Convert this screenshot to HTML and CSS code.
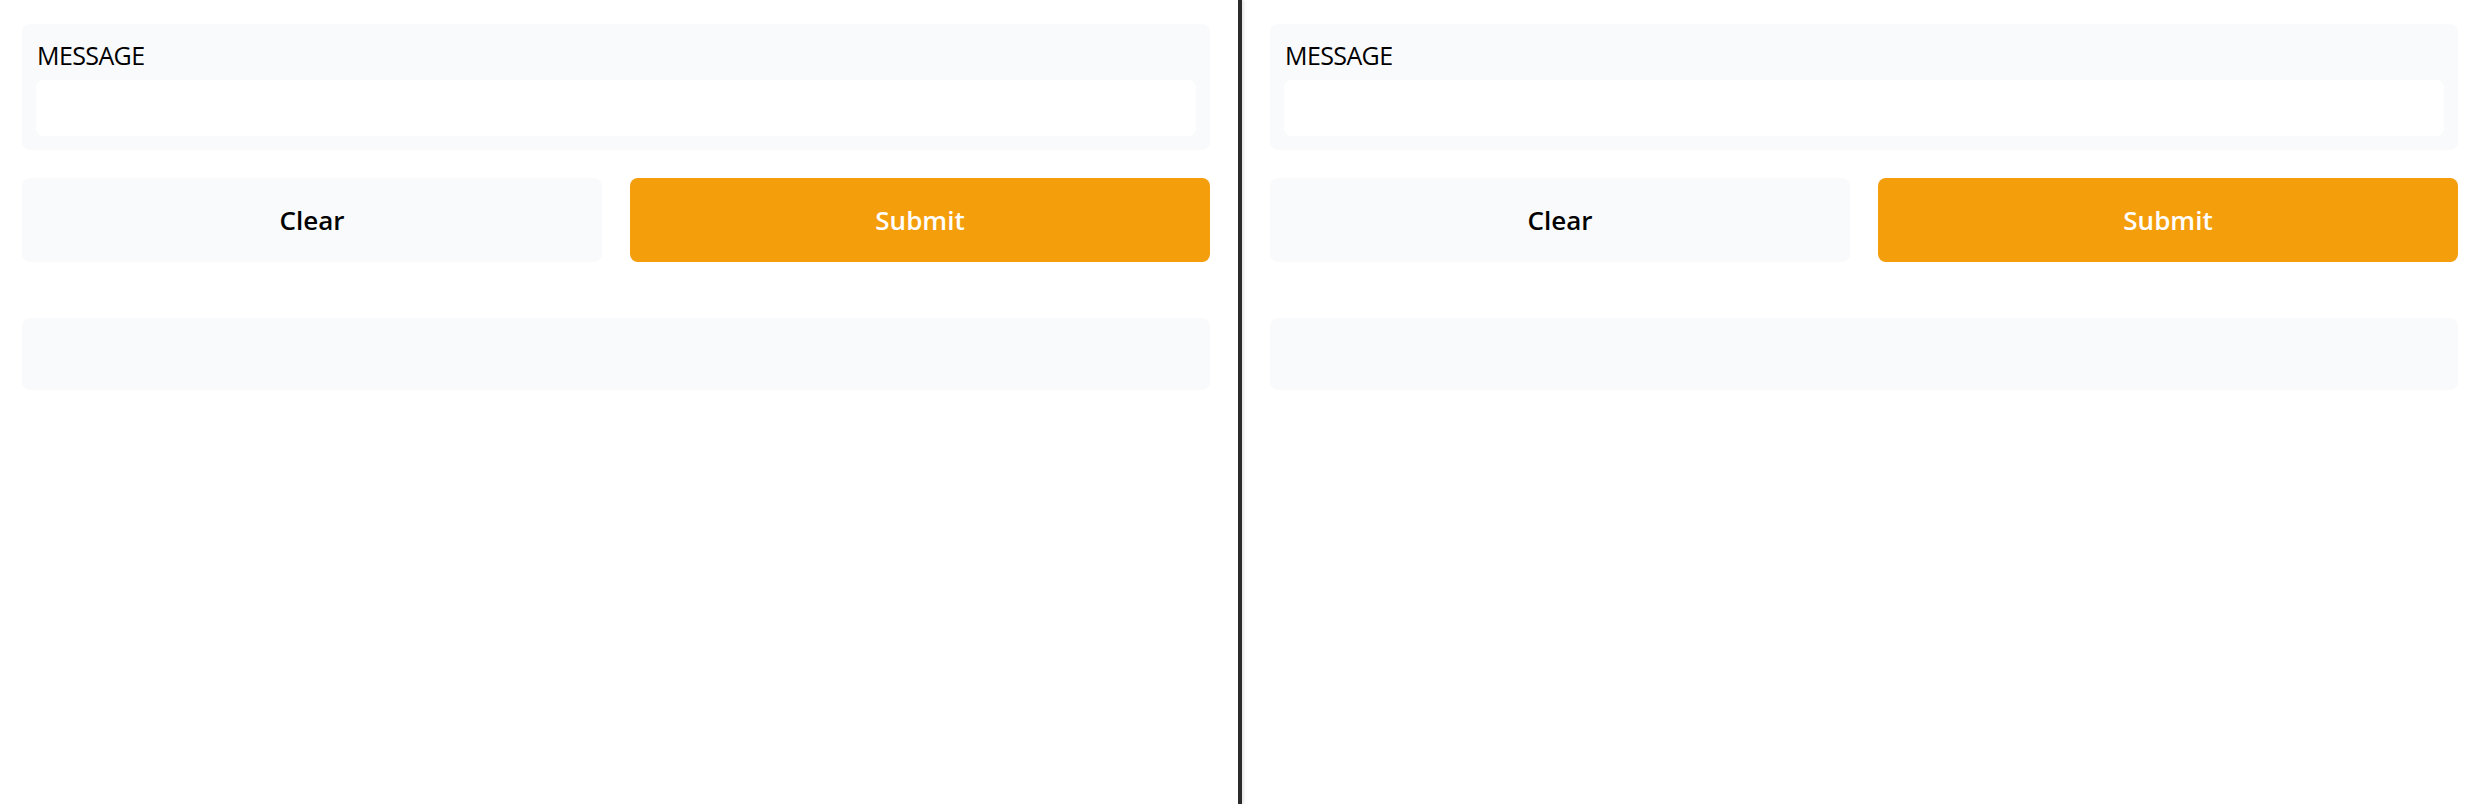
FILE: index.html
```html
<!DOCTYPE html>
<html lang="en">
<head>
<meta charset="utf-8">
<title>Message form</title>
<link rel="stylesheet" href="styles.css">
</head>
<body>
<div class="page">
  <section class="pane pane-left">
    <div class="field-block">
      <label class="field-label">MESSAGE</label>
      <div class="field-input"></div>
    </div>
    <div class="button-row">
      <button class="btn btn-secondary">Clear</button>
      <button class="btn btn-primary">Submit</button>
    </div>
    <div class="output-block"></div>
  </section>
  <div class="divider"></div>
  <section class="pane pane-right">
    <div class="field-block">
      <label class="field-label">MESSAGE</label>
      <div class="field-input"></div>
    </div>
    <div class="button-row">
      <button class="btn btn-secondary">Clear</button>
      <button class="btn btn-primary">Submit</button>
    </div>
    <div class="output-block"></div>
  </section>
</div>
</body>
</html>
```

FILE: styles.css
```css
* {
  box-sizing: border-box;
}

html, body {
  margin: 0;
  padding: 0;
  background: #ffffff;
}

body {
  font-family: "Open Sans", "Noto Sans", sans-serif;
  color: #000000;
}

.page {
  display: flex;
  height: 804px;
  width: 2470px;
}

.pane {
  display: flex;
  flex-direction: column;
  padding-top: 24px;
}

.pane-left {
  width: 1238px;
  padding-left: 22px;
  padding-right: 28px;
}

.pane-right {
  flex: 1;
  padding-left: 28px;
  padding-right: 12px;
}

.divider {
  width: 4px;
  background: #2b2b2b;
  box-shadow: 2px 0 3px rgba(0, 0, 0, 0.10);
  position: relative;
  z-index: 1;
}

.field-block {
  background: #f9fafb;
  border-radius: 8px;
  padding: 14px;
  display: flex;
  flex-direction: column;
}

.field-label {
  font-size: 25px;
  line-height: 34px;
  letter-spacing: -0.6px;
  font-weight: 500;
  color: #000000;
  margin-bottom: 8px;
  padding-left: 1px;
}

.field-input {
  height: 56px;
  background: #ffffff;
  border-radius: 8px;
}

.button-row {
  margin-top: 28px;
  display: grid;
  grid-template-columns: 1fr 1fr;
  gap: 28px;
}

.btn {
  height: 84px;
  border: none;
  border-radius: 8px;
  font-family: "Open Sans", "Noto Sans", sans-serif;
  font-size: 26px;
  font-weight: 600;
  padding: 0;
  cursor: pointer;
}

.btn-secondary {
  background: #f9fafb;
  color: #000000;
}

.btn-primary {
  background: #f49e0c;
  color: #ffffff;
}

.output-block {
  margin-top: 56px;
  height: 72px;
  background: #f9fafb;
  border-radius: 8px;
}
```
